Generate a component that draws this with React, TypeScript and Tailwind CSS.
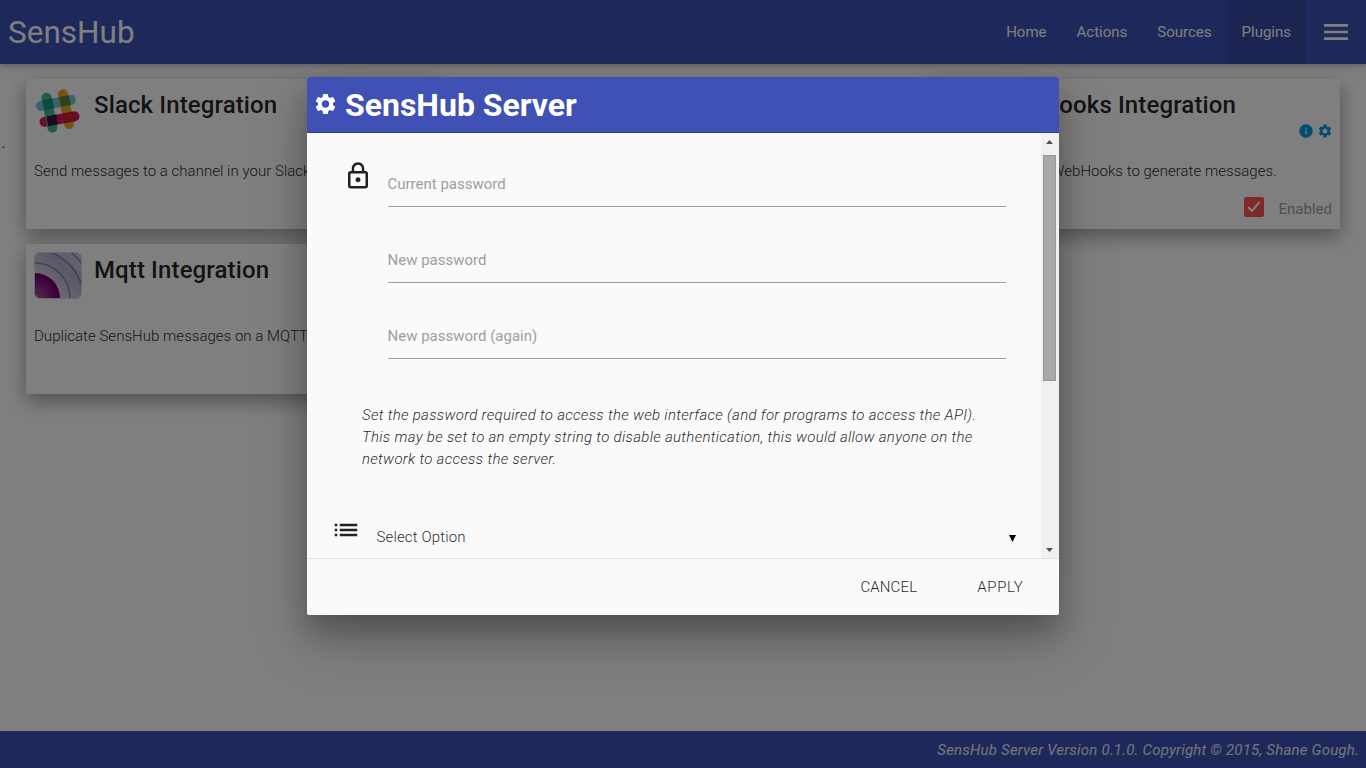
import type { ReactNode } from 'react';
import { MdInfo, MdList, MdMenu, MdSettings } from 'react-icons/md';

function SlackLogo() {
  return (
    <svg width="48" height="48" viewBox="0 0 48 48" strokeWidth="10" strokeLinecap="round" className="shrink-0">
      <path d="M7 18.800 37 12.800" stroke="#6ecadc" />
      <path d="M29 7.300 35 37" stroke="#e9a820" />
      <path d="M10.500 34.800 40.500 29.300" stroke="#e01563" />
      <path d="M12.500 10.700 18.400 40.500" stroke="#3eb991" />
      <path d="M8.600 13.400 18.400 11.500 20.300 21.200 10.500 23.100z" fill="#1a937d" />
      <path d="M25 10.100 34.800 8.200 36.800 18 27 19.900z" fill="#63803a" />
      <path d="M12.400 29.400 22.200 27.600 24 37.300 14.200 39.200z" fill="#361238" />
      <path d="M28.800 26.400 38.600 24.600 40.500 34.400 30.700 36.200z" fill="#cc2027" />
    </svg>
  );
}

function MqttLogo() {
  return (
    <svg width="48" height="48" viewBox="0 0 48 48" fill="none" className="shrink-0">
      <defs>
        <linearGradient id="sky" x1="0" y1="48" x2="48" y2="0" gradientUnits="userSpaceOnUse">
          <stop offset="0.3" stopColor="#d4d0e2" />
          <stop offset="0.65" stopColor="#b3b1cf" />
          <stop offset="1" stopColor="#d5d3e2" />
        </linearGradient>
        <radialGradient id="core" cx="1" cy="47" r="26" gradientUnits="userSpaceOnUse">
          <stop offset="0" stopColor="#a65aa6" />
          <stop offset="0.9" stopColor="#740070" />
        </radialGradient>
        <clipPath id="tile">
          <rect x="1" y="1" width="46" height="45" rx="5" />
        </clipPath>
      </defs>
      <rect x="0.5" y="0.5" width="47" height="46" rx="5.5" fill="url(#sky)" stroke="#d9cfe0" />
      <g clipPath="url(#tile)">
        <circle cx="1" cy="46" r="25" fill="url(#core)" />
        <circle cx="1" cy="46" r="35" stroke="#8480b4" strokeWidth="1.500" />
        <circle cx="1" cy="46" r="48" stroke="#8480b4" strokeWidth="1.700" />
        <circle cx="1" cy="46" r="58" stroke="#8480b4" strokeWidth="1.700" />
      </g>
    </svg>
  );
}

function LockIcon() {
  return (
    <svg width="30" height="30" viewBox="0 0 24 24" fill="currentColor" className="shrink-0">
      <path d="M12 17c1.100 0 2-.9 2-2s-.9-2-2-2-2 .9-2 2 .9 2 2 2zm6-9h-1V6c0-2.760-2.240-5-5-5S7 3.240 7 6v2H6c-1.100 0-2 .9-2 2v10c0 1.100.9 2 2 2h12c1.100 0 2-.9 2-2V10c0-1.100-.9-2-2-2zM8.900 6c0-1.710 1.390-3.100 3.100-3.100s3.100 1.390 3.100 3.100v2H8.900V6zM18 20H6V10h12v10z" />
    </svg>
  );
}

interface CardProps {
  logo?: ReactNode;
  title: string;
  text: string;
  className?: string;
  children?: ReactNode;
}

function PluginCard({ logo, title, text, className = '', children }: CardProps) {
  return (
    <article
      className={`flex h-[150px] flex-col bg-white px-2 shadow-[0_8px_17px_0_rgba(0,0,0,0.2),0_6px_20px_0_rgba(0,0,0,0.19)] ${className}`}
    >
      <div className="flex h-[81px] gap-3 pt-2">
        {logo ?? <div className="size-12 shrink-0" />}
        <h2 className="pt-[1px] text-[24px] leading-[34px] font-medium tracking-[0.12px] whitespace-nowrap">{title}</h2>
      </div>
      <p className="leading-[22px] font-light tracking-[0.03px] whitespace-nowrap">{text}</p>
      {children}
    </article>
  );
}

function PasswordField({ label }: { label: string }) {
  return (
    <div className="h-[45px] border-b border-[#9e9e9e] pt-[11px] leading-[22px] text-[#9e9e9e]">
      <span className="-ml-[0.5px]">{label}</span>
    </div>
  );
}

const fields = ['Current password', 'New password', 'New password (again)'];

export default function App() {
  return (
    <div className="relative flex h-[768px] w-[1366px] flex-col overflow-hidden bg-white font-[Roboto,sans-serif] text-[15px] text-black/87">
      <header className="flex h-16 shrink-0 items-center bg-[#3f51b5] text-white shadow-[0_2px_5px_0_rgba(0,0,0,0.16),0_2px_10px_0_rgba(0,0,0,0.12)]">
        <div className="flex-1 pt-0.5 pl-2 text-[31.500px] leading-[62px]">SensHub</div>
        <nav className="flex leading-16">
          <a className="px-[15px]">Home</a>
          <a className="px-[15px]">Actions</a>
          <a className="px-[15px]">Sources</a>
          <a className="bg-black/10 px-[15px]">Plugins</a>
        </nav>
        <div className="flex w-15 justify-center">
          <MdMenu size={32} />
        </div>
      </header>

      <main className="flex flex-1">
        <div className="w-[26px] pt-[68px] pl-[1.500px] leading-[22px]">.</div>
        <div className="grid w-[1314px] grid-cols-3 content-start gap-x-[37px] gap-y-[15px] pt-[15px]">
          <PluginCard logo={<SlackLogo />} title="Slack Integration" text="Send messages to a channel in your Slack team." />
          <PluginCard className="col-start-3" title="WebHooks Integration" text="Allows the use of WebHooks to generate messages.">
            <div className="-mt-[59px] -mr-[0.5px] flex h-[15px] justify-end gap-[3px] text-[#039be5]">
              <MdInfo size={16} />
              <MdSettings size={16} />
            </div>
            <div className="mt-[58px] flex items-center justify-end gap-[15px] text-[#9e9e9e]">
              <div className="flex size-5 items-center justify-center rounded-[2px] bg-[#ff5252]">
                <svg width="16" height="16" viewBox="0 0 16 16" fill="none" stroke="white" strokeWidth="2">
                  <path d="m2 8 4 4 7.500-9" />
                </svg>
              </div>
              <span className="translate-y-0.5">Enabled</span>
            </div>
          </PluginCard>
          <PluginCard logo={<MqttLogo />} title="Mqtt Integration" text="Duplicate SensHub messages on a MQTT broker." />
        </div>
      </main>

      <footer className="flex h-[37px] shrink-0 items-center justify-end bg-[#3f51b5] pt-0.5 pr-[7px] tracking-[0.2px] text-[#e8eaf6] italic">
        SensHub Server Version 0.1.0. Copyright © 2015, Shane Gough.
      </footer>

      <div className="absolute inset-0 flex justify-center bg-black/50 pt-[77px]">
        <section className="flex h-[538px] w-[752px] flex-col overflow-hidden rounded-[2px] bg-[#fafafa] shadow-[0_16px_28px_0_rgba(0,0,0,0.22),0_25px_55px_0_rgba(0,0,0,0.21)]">
          <h1 className="flex h-14 shrink-0 items-center gap-[7.500px] border-b border-[#303f9f] bg-[#3f51b5] pl-[5.500px] text-[32px] font-bold text-white">
            <MdSettings size={25} className="-translate-y-[0.5px]" />
            SensHub Server
          </h1>

          <div className="flex h-[425px] overflow-hidden">
            <div className="flex-1">
              <div className="flex pt-7 pl-[35.500px]">
                <LockIcon />
                <div className="ml-[15.500px] flex w-[618px] flex-col gap-[31px] pt-[1px]">
                  {fields.map((label) => (
                    <PasswordField key={label} label={label} />
                  ))}
                </div>
              </div>
              <p className="mt-[45px] ml-[55px] w-[630px] leading-[22px] font-light tracking-[0.3px] italic">
                Set the password required to access the web interface (and for programs to access the API). This may be
                set to an empty string to disable authentication, this would allow anyone on the network to access the
                server.
              </p>
              <div className="mt-[45px] flex h-11 pl-6">
                <MdList size={30} />
                <div className="ml-[15.500px] flex w-[639.500px] items-center justify-between font-light tracking-[0.15px]">
                  Select Option
                  <svg width="7" height="7" viewBox="0 0 7 7" className="translate-y-[1px]">
                    <path d="M0 0h7L3.500 7z" />
                  </svg>
                </div>
              </div>
            </div>
            <div className="flex w-[18px] flex-col items-center justify-between bg-[#f0f0f0] pt-[7px] pr-[1px] pb-[6px]">
              <svg width="7" height="4" viewBox="0 0 7 4" fill="#505050">
                <path d="M0 4 3.500 0 7 4z" />
              </svg>
              <div className="mt-[11px] h-[226px] w-[13px] border border-[#999] bg-[#a8a8a8]" />
              <svg width="7" height="4" viewBox="0 0 7 4" fill="#505050" className="mt-auto">
                <path d="M0 0h7L3.500 4z" />
              </svg>
            </div>
          </div>

          <div className="flex flex-1 items-center justify-end gap-15 border-t border-[#e0e0e0] pr-9 font-light">
            <span className="tracking-[0.15px]">CANCEL</span>
            <span className="-mr-[0.5px] tracking-[0.65px]">APPLY</span>
          </div>
        </section>
      </div>
    </div>
  );
}
